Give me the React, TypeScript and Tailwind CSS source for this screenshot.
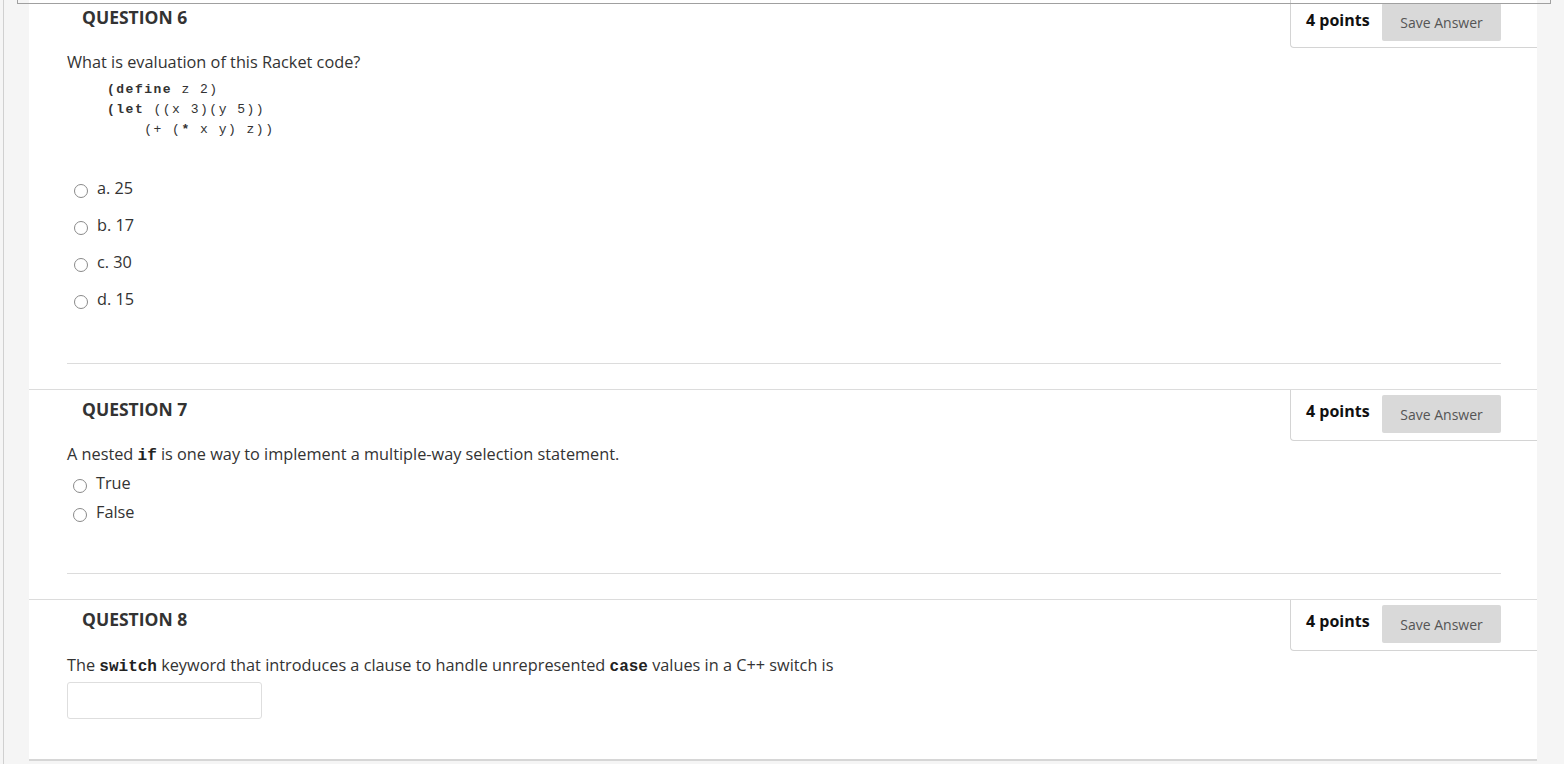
import type { ReactNode } from 'react';

const sans = { fontFamily: '"Open Sans", "Noto Sans", Arial, sans-serif' };
const mono = '[font-family:"Liberation_Mono","DejaVu_Sans_Mono",monospace]';

function Radio({ label, rowClass }: { label: string; rowClass: string }) {
  return (
    <label className={`flex items-center ${rowClass}`}>
      <span className="ml-[7px] mt-[5px] h-[14px] w-[14px] rounded-full border border-[#8a8a8a] bg-white" />
      <span className="ml-[9px] text-[16.3px] text-[#333]">{label}</span>
    </label>
  );
}

function Header({ n, first }: { n: number; first?: boolean }) {
  return (
    <div className="flex h-[51px] items-start justify-between">
      <h2 className={`pl-[53px] text-[17.5px] font-bold text-[#333] ${first ? 'pt-[7px]' : 'pt-[6px]'}`}>QUESTION {n}</h2>
      <div className="flex h-[51px] w-[247px] items-start rounded-bl-[4px] border-b border-l border-[#d4d4d4] pl-[15px] pr-[36px]">
        <span className={`text-[16px] leading-[24px] font-bold text-[#111] ${first ? 'mt-[11px]' : 'mt-[9px]'}`}>4 points</span>
        <button className={`ml-auto h-[38px] w-[119px] rounded-[2px] bg-[#d9d9d9] text-[14px] text-[#555] ${first ? 'mt-[6px]' : 'mt-[5px]'}`}>
          Save Answer
        </button>
      </div>
    </div>
  );
}

function Section({ n, children, first }: { n: number; children: ReactNode; first?: boolean }) {
  return (
    <section className={first ? '-mt-[3px]' : 'border-t border-[#dcdcdc]'}>
      <Header n={n} first={first} />
      <div className="pl-[38px] pr-[36px]">{children}</div>
    </section>
  );
}

function Code({ children }: { children: ReactNode }) {
  return <code className={`${mono} text-[16px] font-bold leading-none text-[#222]`}>{children}</code>;
}

export default function App() {
  return (
    <div className="relative flex h-[764px] overflow-hidden bg-[#f5f5f5]" style={sans}>
      <div className="absolute left-[17px] top-0 h-[4px] w-[1534px] border-b border-l border-r border-[#a0a0a0]" />
      <div className="w-[29px] shrink-0">
        <div className="ml-[3px] h-full border-l border-[#d0d0d0]" />
      </div>
      <main className="h-[761px] w-[1508px] shrink-0 border-b-2 border-[#d6d6d6] bg-white">
        <Section n={6} first>
          <p className="mt-[2px] text-[16.3px] leading-[24px] text-[#333]">What is evaluation of this Racket code?</p>
          <pre className={`${mono} mt-[6px] pl-[40px] text-[13px] leading-[20px] tracking-[1.5px] text-[#333]`}>
            <b>(define</b> z 2){'\n'}
            <b>(let</b> ((x 3)(y 5)){'\n'}
            {'    '}(+ (<b>*</b> x y) z))
          </pre>
          <div className="mt-[30px]">
            {['a. 25', 'b. 17', 'c. 30', 'd. 15'].map((o) => (
              <Radio key={o} label={o} rowClass="h-[37px]" />
            ))}
          </div>
          <hr className="mt-[45px] border-[#dcdcdc]" />
          <div className="h-[25px]" />
        </Section>
        <Section n={7}>
          <p className="mt-[1px] text-[16.3px] leading-[24px] text-[#333]">
            A nested <Code>if</Code> is one way to implement a multiple-way selection statement.
          </p>
          <div className="mt-[3px]">
            <Radio label="True" rowClass="h-[29px] -ml-[1px]" />
            <Radio label="False" rowClass="h-[29px] -ml-[1px]" />
          </div>
          <hr className="mt-[46px] border-[#dcdcdc]" />
          <div className="h-[25px]" />
        </Section>
        <Section n={8}>
          <p className="mt-[2px] text-[16.3px] leading-[24px] text-[#333]">
            The <Code>switch</Code> keyword that introduces a clause to handle unrepresented <Code>case</Code> values in
            a C++ switch is
          </p>
          <input className="mt-[5px] h-[37px] w-[195px] rounded-[3px] border border-[#dedede] outline-none" />
        </Section>
      </main>
    </div>
  );
}
